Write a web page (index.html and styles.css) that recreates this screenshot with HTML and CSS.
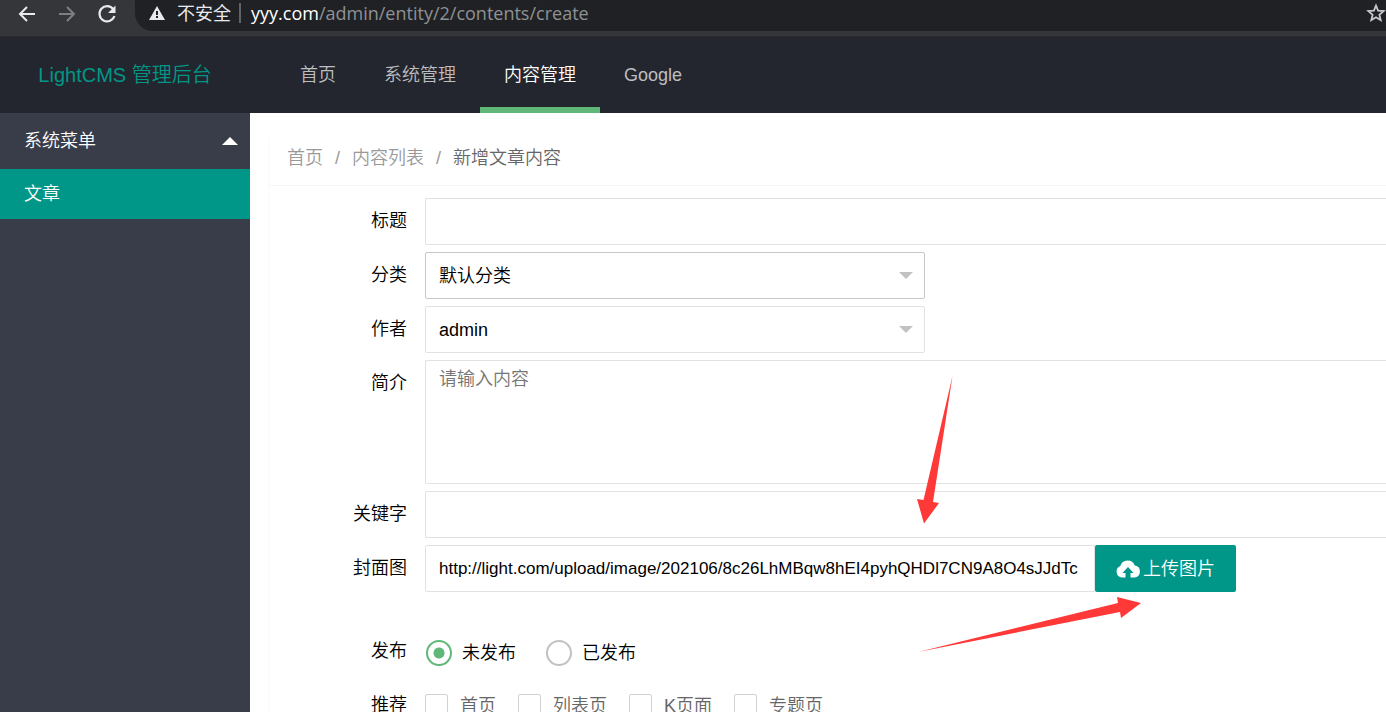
FILE: index.html
```
<!DOCTYPE html>
<html lang="zh-CN">
<head>
<meta charset="utf-8">
<title>新增文章内容</title>
<link rel="stylesheet" href="styles.css">
</head>
<body>
<div class="browser">
  <button class="tool" type="button" aria-label="后退"><svg width="20" height="20" viewBox="0 0 20 20"><path d="M18 10H3M10 3L3 10l7 7" fill="none" stroke="#e8eaed" stroke-width="2"/></svg></button>
  <button class="tool" type="button" aria-label="前进"><svg width="20" height="20" viewBox="0 0 20 20"><path d="M2 10h15M10 3l7 7-7 7" fill="none" stroke="#7d7f82" stroke-width="2"/></svg></button>
  <button class="tool" type="button" aria-label="刷新"><svg width="20" height="20" viewBox="0 0 20 20"><path d="M16.2 5.2A7.6 7.6 0 1 0 17.4 12" fill="none" stroke="#e8eaed" stroke-width="2.2"/><path d="M18.5 1.5v7.5h-7.5z" fill="#e8eaed"/></svg></button>
  <div class="address">
    <svg width="16" height="14" viewBox="0 0 16 14"><path d="M8 0l8 14H0z" fill="#e8eaed"/><path d="M7 5h2v4H7zM7 10h2v2H7z" fill="#202124"/></svg>
    <span class="insecure">不安全</span>
    <span class="divider"></span>
    <span class="url"><span class="host">yyy.com</span>/admin/entity/2/contents/create</span>
    <button class="star" type="button" aria-label="收藏"><svg width="20" height="20" viewBox="0 0 20 20"><path d="M10 2.6l2.1 5.1 5.5.4-4.2 3.6 1.3 5.4-4.700-2.900-4.700 2.900 1.300-5.400-4.200-3.600 5.500-.4z" fill="none" stroke="#c6c8cb" stroke-width="1.8"/></svg></button>
  </div>
</div>
<header class="header">
  <a class="logo" href="#">LightCMS 管理后台</a>
  <nav class="nav">
    <a href="#">首页</a>
    <a href="#">系统管理</a>
    <a class="active" href="#">内容管理</a>
    <a href="#">Google</a>
  </nav>
</header>
<div class="layout">
  <aside class="sidebar">
    <a class="group" href="#">系统菜单<svg width="16" height="8" viewBox="0 0 16 8"><path d="M8 0l8 8H0z" fill="#fff"/></svg></a>
    <a class="entry" href="#">文章</a>
  </aside>
  <main class="panel">
    <nav class="crumbs">
      <a href="#">首页</a><span>/</span><a href="#">内容列表</a><span>/</span><a class="current" href="#">新增文章内容</a>
    </nav>
    <form class="form">
      <div class="row"><label class="label" for="title">标题</label><input class="control wide" id="title" type="text"></div>
      <div class="row"><label class="label" for="category">分类</label>
        <div class="select"><select class="control focused" id="category"><option>默认分类</option></select><svg width="14" height="7" viewBox="0 0 14 7"><path d="M0 0h14L7 7z" fill="#c2c2c2"/></svg></div></div>
      <div class="row"><label class="label" for="author">作者</label>
        <div class="select"><select class="control" id="author"><option>admin</option></select><svg width="14" height="7" viewBox="0 0 14 7"><path d="M0 0h14L7 7z" fill="#c2c2c2"/></svg></div></div>
      <div class="row"><label class="label" for="intro">简介</label><textarea class="control wide intro" id="intro" placeholder="请输入内容"></textarea></div>
      <div class="row"><label class="label" for="keywords">关键字</label><input class="control wide" id="keywords" type="text"></div>
      <div class="row"><label class="label" for="cover">封面图</label><input class="control cover" id="cover" type="text" value="http://light.com/upload/image/202106/8c26LhMBqw8hEI4pyhQHDl7CN9A8O4sJJdTc"><button class="upload" type="button"><svg width="24" height="18" viewBox="0 0 24 18"><path d="M6 17.5a6 6 0 0 1-1.700-11.500A7.600 7.600 0 0 1 18.800 5.600 6 6 0 0 1 18.500 17.500H14.500V13h3L12 7l-5.500 6h3v4.500z" fill="#fff"/></svg>上传图片</button></div>
      <div class="row options publish"><span class="label">发布</span>
        <label class="radio"><input type="radio" name="publish" checked>未发布</label>
        <label class="radio"><input type="radio" name="publish">已发布</label></div>
      <div class="row options"><span class="label">推荐</span>
        <label class="check"><input type="checkbox">首页</label>
        <label class="check"><input type="checkbox">列表页</label>
        <label class="check"><input type="checkbox">K页面</label>
        <label class="check"><input type="checkbox">专题页</label></div>
    </form>
  </main>
</div>
<svg class="arrows" width="230" height="280" viewBox="915 375 230 280" aria-hidden="true">
  <path d="M952.500 376L933 502l6 1-15 20.500-7-24.500 6.500 1zM918 652L1118 603l-1-6 24 6-20 15-1-6z" fill="#ff3838"/>
</svg>
</body>
</html>
```

FILE: styles.css
```
* { box-sizing: border-box; }
body {
  margin: 0;
  height: 100vh;
  overflow: hidden;
  display: flex;
  flex-direction: column;
  background: #fff;
  color: #000;
  font: 350 18px/24px "Liberation Sans", "Noto Sans CJK SC", sans-serif;
}
a { color: inherit; text-decoration: none; }
button { border: 0; padding: 0; background: none; font: inherit; }
svg { display: block; flex: none; }

.browser {
  flex: none;
  display: flex;
  align-items: flex-start;
  gap: 20px;
  height: 37px;
  padding-left: 17px;
  background: #35363a;
  border-bottom: 1px solid #292a2e;
}
.tool { width: 20px; padding-top: 4px; }
.address {
  flex: 1;
  display: flex;
  align-items: center;
  height: 31px;
  padding: 0 0 5px 14px;
  margin-left: -2px;
  background: #202124;
  border-radius: 0 0 0 18px;
  color: #9aa0a6;
  font-family: "Noto Sans", "Noto Sans CJK SC", sans-serif;
  font-weight: 400;
}
.insecure { margin-left: 12px; color: #e8eaed; }
.divider { width: 2px; height: 20px; margin: 0 10px 0 8px; background: #5f6368; }
.url { font-family: "Open Sans", "Noto Sans", sans-serif; font-size: 18px; color: #8f9194; }
.host { color: #fff; }
.star { margin-left: auto; }

.header {
  flex: none;
  display: flex;
  height: 76px;
  background: #23262e;
  color: #bdbec0;
}
.logo {
  width: 250px;
  text-align: center;
  line-height: 76px;
  font-size: 20px;
  color: #009688;
}
.nav { display: flex; margin-left: 26px; }
.nav a { padding: 0 24px; line-height: 76px; }
.nav .active { color: #fff; border-bottom: 6px solid #5fb878; }

.layout { flex: 1; display: flex; min-height: 0; }
.sidebar { flex: none; width: 250px; background: #393d49; color: #fff; }
.group {
  display: flex;
  align-items: center;
  justify-content: space-between;
  height: 56px;
  padding: 0 12px 0 24px;
}
.entry { display: block; padding-left: 24px; line-height: 50px; background: #009688; }

.panel { flex: 1; min-width: 0; margin: 24px 0 0 18px; border-left: 1px solid #fafafa; }
.crumbs {
  display: flex;
  gap: 12px;
  padding: 9px 18px 15px;
  border-bottom: 1px solid #f6f6f6;
  color: #999;
}
.crumbs .current { color: #666; }

.form { display: flex; flex-direction: column; gap: 7px; padding-top: 12px; }
.row { display: flex; }
.label {
  flex: none;
  width: 138px;
  margin-right: 18px;
  line-height: 47px;
  text-align: right;
}
.control {
  height: 47px;
  margin: 0;
  padding: 0 13px;
  border: 1px solid #e2e2e2;
  border-radius: 2px;
  background: #fff;
  color: #000;
  font: inherit;
  outline: 0;
}
.wide { flex: 1; min-width: 0; border-right: 0; border-radius: 2px 0 0 2px; }
.intro { height: 124px; padding-top: 6px; resize: none; }
.intro::placeholder { color: #757575; }
.select { position: relative; width: 500px; }
.select .control { display: block; width: 100%; appearance: none; }
.select .focused { border-color: #c8c8c8; }
.select svg { position: absolute; right: 12px; top: 20px; pointer-events: none; }
.cover { width: 670px; padding-right: 0; border-radius: 2px 0 0 2px; font-size: 17px; }
.upload {
  display: flex;
  align-items: center;
  justify-content: center;
  gap: 3px;
  width: 141px;
  height: 47px;
  border-radius: 2px;
  background: #009688;
  color: #fff;
}

.publish { margin-top: 29px; }
.options { align-items: center; }
.radio, .check { display: flex; align-items: center; }
.radio { gap: 10px; margin: 2px 29px 0 1px; }
.check { gap: 12px; margin-right: 22px; color: #666; }
.radio input, .check input {
  appearance: none;
  flex: none;
  margin: 0;
  background: #fff;
}
.radio input { width: 26px; height: 26px; border: 2px solid #c2c2c2; border-radius: 50%; }
.radio input:checked {
  border-color: #5fb878;
  background: radial-gradient(circle, #5fb878 5px, #fff 6px);
}
.check input { width: 23px; height: 23px; border: 1px solid #d2d2d2; border-radius: 2px; }

.arrows { position: absolute; left: 915px; top: 375px; pointer-events: none; }
```
